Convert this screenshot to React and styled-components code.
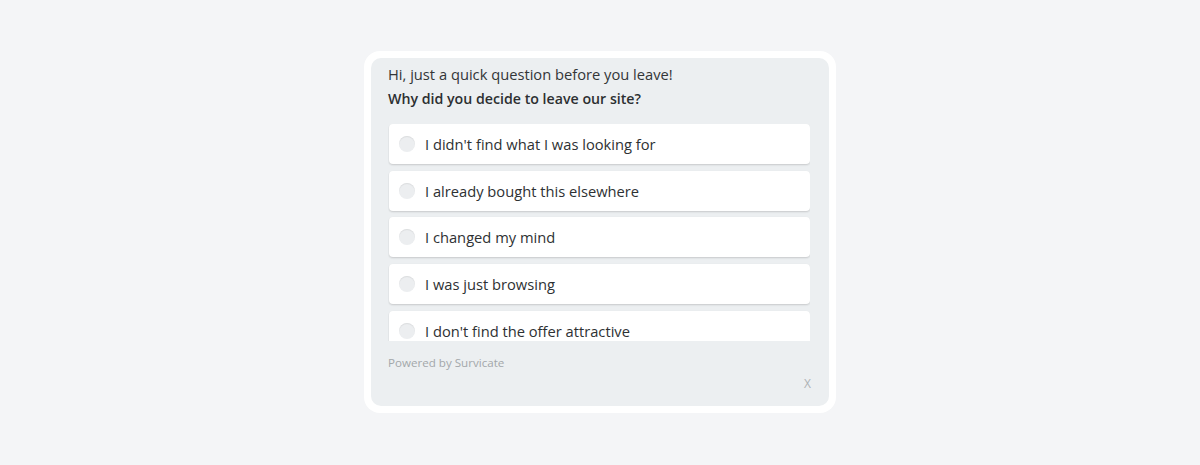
import { createGlobalStyle } from "styled-components";
import styled from "styled-components";

const GlobalStyle = createGlobalStyle`
  html, body {
    margin: 0;
    padding: 0;
    background: #f4f5f7;
    font-family: "Open Sans", "Noto Sans", sans-serif;
  }
`;

const Page = styled.div`
  height: 465px;
  display: flex;
  justify-content: center;
  padding-top: 51px;
  box-sizing: border-box;
`;

const Frame = styled.div`
  width: 472px;
  height: 362px;
  box-sizing: border-box;
  padding: 7px;
  background: #ffffff;
  border-radius: 16px;
`;

const Panel = styled.div`
  height: 100%;
  box-sizing: border-box;
  background: #eceff1;
  border-radius: 10px;
  padding: 6px 19px 0 17px;
  display: flex;
  flex-direction: column;
`;

const Intro = styled.p`
  margin: 0;
  font-size: 14.7px;
  line-height: 20px;
  color: #333638;
`;

const Question = styled.h2`
  margin: 5px 0 0;
  font-size: 14.2px;
  line-height: 20px;
  font-weight: 600;
  color: #2c2f31;
`;

const Options = styled.div`
  margin-top: 15px;
  height: 217px;
  overflow: hidden;
  display: flex;
  flex-direction: column;
  gap: 6.7px;
  padding-left: 1px;
`;

const Option = styled.label`
  flex: none;
  height: 40px;
  background: #ffffff;
  border-radius: 4px;
  box-shadow: 0 1px 2px rgba(0, 0, 0, 0.16);
  display: flex;
  align-items: center;
  gap: 10px;
  padding-left: 10px;
  font-size: 14.7px;
  color: #2e3133;
  cursor: pointer;
`;

const Radio = styled.span`
  width: 16px;
  height: 16px;
  border-radius: 50%;
  background: #eceef0;
  box-shadow: inset 0 1px 1px rgba(0, 0, 0, 0.08);
`;

const Footer = styled.div`
  margin-top: 14px;
  display: flex;
  flex-direction: column;
`;

const Powered = styled.span`
  font-size: 11.6px;
  line-height: 16px;
  color: #a3a7aa;
`;

const Close = styled.button`
  align-self: flex-end;
  margin-top: 6px;
  margin-right: -1px;
  background: none;
  border: none;
  padding: 0;
  font-family: inherit;
  font-size: 12px;
  line-height: 14px;
  color: #aeb2b5;
  cursor: pointer;
`;

const answers = [
  "I didn't find what I was looking for",
  "I already bought this elsewhere",
  "I changed my mind",
  "I was just browsing",
  "I don't find the offer attractive",
];

export default function App() {
  return (
    <>
      <GlobalStyle />
      <Page>
        <Frame>
          <Panel>
            <Intro>Hi, just a quick question before you leave!</Intro>
            <Question>Why did you decide to leave our site?</Question>
            <Options>
              {answers.map((a) => (
                <Option key={a}>
                  <Radio />
                  {a}
                </Option>
              ))}
            </Options>
            <Footer>
              <Powered>Powered by Survicate</Powered>
              <Close>X</Close>
            </Footer>
          </Panel>
        </Frame>
      </Page>
    </>
  );
}
